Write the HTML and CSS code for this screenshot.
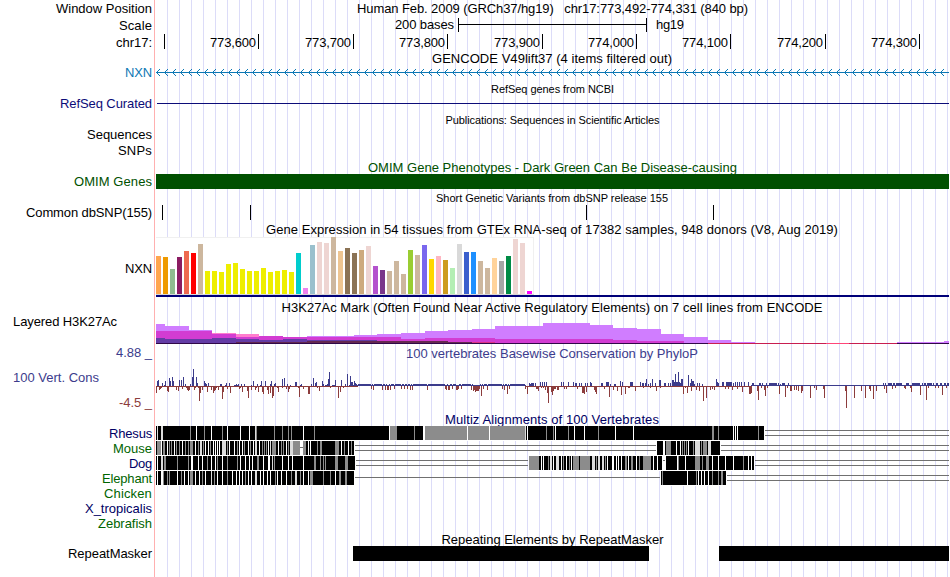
FILE: index.html
```html
<!DOCTYPE html>
<html lang="en">
<head>
<meta charset="utf-8">
<title>Human chr17:773,492-774,331</title>
<link rel="stylesheet" href="styles.css">
</head>
<body>
<main class="browser">
  <div class="row h17"><div class="label"><span data-w="96">Window Position</span></div><div class="title even"><span data-w="391">Human Feb. 2009 (GRCh37/hg19)   chr17:773,492-774,331 (840 bp)</span></div></div>
  <div class="row h17"><div class="label"><span data-w="33">Scale</span></div><svg id="scale"></svg></div>
  <div class="row h17"><div class="label"><span data-w="36">chr17:</span></div><svg id="ruler"></svg></div>
  <div class="row h15"><div class="label"></div><div class="title"><span data-w="240">GENCODE V49lift37 (4 items filtered out)</span></div></div>
  <div class="row h15 blue"><div class="label up"><span data-w="27">NXN</span></div><svg id="gencode"></svg></div>
  <div class="row h16"><div class="label"></div><div class="title small even"><span data-w="123">RefSeq genes from NCBI</span></div></div>
  <div class="row h15 navy"><div class="label up"><span data-w="92">RefSeq Curated</span></div><svg id="refseq"></svg></div>
  <div class="row h15"><div class="label"></div><div class="title small low even"><span data-w="214">Publications: Sequences in Scientific Articles</span></div></div>
  <div class="row h16"><div class="label top"><span data-w="65">Sequences</span></div></div>
  <div class="row h16"><div class="label top"><span data-w="34">SNPs</span></div></div>
  <div class="row h15 green"><div class="label"></div><div class="title low even"><span data-w="369">OMIM Gene Phenotypes - Dark Green Can Be Disease-causing</span></div></div>
  <div class="row h15 green"><div class="label"><span data-w="78">OMIM Genes</span></div><svg id="omim"></svg></div>
  <div class="row h16"><div class="label"></div><div class="title small lower"><span data-w="232">Short Genetic Variants from dbSNP release 155</span></div></div>
  <div class="row h16"><div class="label top"><span data-w="126">Common dbSNP(155)</span></div><svg id="dbsnp"></svg></div>
  <div class="row h16"><div class="label"></div><div class="title"><span data-w="572">Gene Expression in 54 tissues from GTEx RNA-seq of 17382 samples, 948 donors (V8, Aug 2019)</span></div></div>
  <div class="row h63"><div class="label"><span data-w="27">NXN</span></div><svg id="gtex"></svg></div>
  <div class="row h15"><div class="label"></div><div class="title"><span data-w="541">H3K27Ac Mark (Often Found Near Active Regulatory Elements) on 7 cell lines from ENCODE</span></div></div>
  <div class="row h30"><div class="label start up"><span data-w="104">Layered H3K27Ac</span></div><svg id="h3k"></svg></div>
  <div class="row h16 slate"><div class="label top"><span data-w="36">4.88 _</span></div><div class="title"><span data-w="292">100 vertebrates Basewise Conservation by PhyloP</span></div></div>
  <div class="row h51 slate">
    <div class="label stack"><span class="name" data-w="86">100 Vert. Cons</span><span class="brown" data-w="33">-4.5 _</span></div>
    <svg id="phylop"></svg>
  </div>
  <div class="row h14 deep"><div class="label"></div><div class="title"><span data-w="214">Multiz Alignments of 100 Vertebrates</span></div></div>
  <div class="multi">
    <div class="species">
      <span class="deep" data-w="43">Rhesus</span><span class="leaf" data-w="39">Mouse</span><span class="deep" data-w="23">Dog</span><span class="leaf" data-w="50">Elephant</span><span class="leaf" data-w="48">Chicken</span><span class="deep" data-w="67">X_tropicalis</span><span class="leaf" data-w="54">Zebrafish</span>
    </div>
    <svg id="multiz"></svg>
  </div>
  <div class="row h15"><div class="label"></div><div class="title low even"><span data-w="222">Repeating Elements by RepeatMasker</span></div></div>
  <div class="row h15"><div class="label"><span data-w="84">RepeatMasker</span></div><svg id="repeats"></svg></div>
</main>
<script src="tracks.js"></script>
</body>
</html>
```
FILE: styles.css
```css
* { box-sizing: border-box; }
body { margin: 0; background: #fff; font: 13px/15px "Liberation Sans", Arial, sans-serif; color: #000; overflow: hidden; }
.browser {
  width: 949px; height: 577px;
  background:
    linear-gradient(#ffb0b0, #ffb0b0) 154px 0 / 1px 100% no-repeat,
    repeating-linear-gradient(90deg, #dcdcf8 0 1px, transparent 1px 12px) 167px 0 / 782px 100% no-repeat;
}
.row, .multi { display: grid; grid-template-columns: 156px 793px; }
.label { display: flex; align-items: center; justify-content: flex-end; padding-right: 4px; white-space: pre; }
.label.start { justify-content: flex-start; padding-left: 13px; }
.label.top { align-items: flex-start; }
.label.up { align-items: flex-start; margin-top: -1px; }
.label.stack { flex-direction: column; justify-content: space-between; align-items: flex-end; padding-top: 9px; padding-bottom: 2px; }
.name { align-self: flex-start; margin-left: 13px; }
.title { display: flex; align-items: center; justify-content: center; padding-right: 1px; white-space: pre; }
.title.even { padding-right: 0; }
.small { font-size: 11px; }
.low { padding-top: 1px; }
.lower { padding-top: 2px; }
.species { display: grid; grid-template-rows: repeat(7, 15px); justify-items: end; padding-right: 4px; }
svg { display: block; width: 793px; height: 100%; shape-rendering: crispEdges; }
.h14 { height: 14px; }
.h15 { height: 15px; }
.h16 { height: 16px; }
.h17 { height: 17px; }
.h30 { height: 30px; }
.h51 { height: 51px; }
.h63 { height: 63px; }
.multi { height: 105px; }
.blue { color: #0c78b4; }
.navy { color: #0c0c78; }
.green { color: #005000; }
.slate { color: #3c3c8c; }
.brown { color: #8c3c3c; }
.deep { color: #000064; }
.leaf { color: #006400; }
```
FILE: tracks.js
```js
// Horizontal coordinates are image pixels; each track's view starts at x = 156.
const LEFT = 156, WIDTH = 793;
const rect = (x, y, w, h, c) => `<rect x="${x}" y="${y}" width="${w}" height="${h}" fill="${c}"/>`;
const text = (x, y, s, w, a = 'start') => `<text x="${x}" y="${y}" text-anchor="${a}" font-size="13" textLength="${w}">${s}</text>`;
function draw(id, height, body) {
  const el = document.getElementById(id);
  el.setAttribute('viewBox', `${LEFT} 0 ${WIDTH} ${height}`);
  el.innerHTML = body;
}

// Spread each caption over its nominal width.
document.querySelectorAll('[data-w]').forEach(el => {
  const w = el.getBoundingClientRect().width;
  el.style.letterSpacing = (el.dataset.w - w) / el.textContent.length + 'px';
});

draw('scale', 17, rect(458, 7, 189, 1, '#000') + rect(458, 1, 1, 14, '#000') + rect(646, 1, 1, 14, '#000') +
  text(395, 12, '200 bases', 59) + text(656, 12, 'hg19', 28));

draw('ruler', 17, [164, 258, 353, 447, 542, 636, 730, 825, 919].map((x, i) =>
  rect(x, 0, 1, 15, '#000') + (i ? text(x - 48, 13, (773500 + i * 100).toLocaleString('en-US'), 46) : '')).join(''));

let arrows = rect(156, 6, 793, 1, '#0c78b4');
for (let x = 156; x < 944; x += 8)
  for (let d = 1; d < 4; d++) arrows += rect(x + d, 6 - d, 1, 1, '#0c78b4') + rect(x + d, 6 + d, 1, 1, '#0c78b4');
draw('gencode', 15, arrows);
draw('refseq', 15, rect(157, 6, 792, 1, '#0c0c78'));
draw('omim', 15, rect(156, 0, 793, 15, '#005000'));
draw('dbsnp', 16, [162, 250, 586, 713].map(x => rect(x, 0, 1, 15, '#000')).join(''));

// Tissue bars: height in thirds of a pixel, colour.
const tissues = `114 FFA54F,111 EE9A00,75 8FBC8F,111 8B1C62,129 EE6A50,123 FF0000,150 CDB79E,
69 EEEE00,69 EEEE00,66 EEEE00,90 EEEE00,93 EEEE00,75 EEEE00,69 EEEE00,69 EEEE00,78 EEEE00,66 EEEE00,69 EEEE00,72 EEEE00,66 EEEE00,
123 00CDCD,18 EE82EE,147 9AC0CD,156 EED5D2,153 EED5D2,171 CDB79E,129 EEC591,138 8B7355,123 8B7355,132 CDAA7D,144 EED5D2,
84 B452CD,72 7A378B,69 CDB79E,99 CDB79E,60 CDB79E,132 9ACD32,117 CDB79E,147 7A67EE,105 FFD700,114 FFB6C1,102 CD9B1D,78 B4EEB4,
150 D9D9D9,126 3A5FCD,126 1E90FF,99 CDB79E,78 CDB79E,108 FFD39B,99 A6A6A6,114 008B45,165 EED5D2,153 EED5D2,9 FF00FF`.split(',');
draw('gtex', 63, rect(156, 0, 378, 58, '#f0f0f0') + rect(156, 1, 377, 56, '#fff') + rect(156, 57, 378, 1, '#d8d8d8') +
  tissues.map((t, i) => {
    const [h, c] = t.trim().split(' ');
    return rect(156 + i * 7, 57 - h / 3, 5, h / 3, '#' + c);
  }).join('') + rect(156, 58, 793, 2, '#000078'));

// Each layer: colour, then x:top steps; a top of 29 closes the step.
const layers = [
  ['#d07dff', '156:9 165:11 189:15 212:19 236:29 307:21 354:20 377:19 401:18 425:16 448:15 472:14 495:11 543:8 590:10 613:13 637:14 661:19 684:22 708:25 731:27 755:29 897:27 944:26 949:29'],
  ['#ff7dcd', '212:18 236:19 259:29'],
  ['#d23cd2', '156:16 212:19 236:22 259:21 283:22 401:24 425:23 495:24 613:25 637:26 684:29'],
  ['#643ca5', '156:23 165:24 212:23 236:24 259:25 283:24 307:25 377:26 401:29'],
  ['#642850', '236:27 307:26 401:26 448:27 472:29'],
  ['#dc3282', '472:27 495:29'],
  ['#300848', '156:28 708:29 897:28 949:29'],
  ['#c81e50', '708:28 826:29 849:28 897:29'],
  ['#ff4678', '826:28 849:29']
];
draw('h3k', 30, layers.map(([c, s]) => {
  const p = s.split(' ').map(q => q.split(':').map(Number));
  return p.slice(0, -1).map(([x, y], i) => y < 29 ? rect(x, y, p[i + 1][0] - x, 29 - y, c) : '').join('');
}).join(''));

// Conservation scores, x:value; values are bar heights in pixels.
const up = `157:5 158:6 162:3 164:1 165:5 169:8 170:5 172:9 173:5 179:6 181:6 183:9 185:2 190:2 192:9 193:17 196:9 197:3 204:5 205:3 206:2 208:3 220:2 221:2 225:1 226:3 229:3 234:1 235:1 236:2 237:1 238:2 241:2 244:2 251:1 253:5 257:2 260:1 261:5 265:5 270:2 271:5 274:2 275:3 282:7 284:8 287:2 290:1 295:4 296:4 300:1 301:2 311:2 313:8 315:3 316:4 322:5 323:2 325:1 326:1 327:2 328:7 329:14 332:1 333:1 334:1 335:6 341:6 345:2 347:12 349:1 350:10 351:4 352:4 353:1 354:5 355:3 356:2 357:1 529:3 530:2 531:3 532:3 533:3 535:3 540:4 542:4 544:4 546:4 561:4 563:4 568:4 573:4 575:3 576:3 579:3 581:3 585:3 587:3 590:4 591:3 601:3 602:3 606:4 607:4 608:4 610:2 614:2 615:2 620:5 622:4 630:4 631:4 632:4 640:4 642:3 643:3 645:3 646:7 648:2 650:3 652:7 655:3 659:6 660:6 664:3 665:3 668:3 670:3 672:6 673:6 674:4 675:12 676:4 677:4 678:14 679:4 680:3 681:7 682:7 688:11 690:3 691:7 692:5 693:5 694:2 697:3 699:3 702:2 716:7 717:4 718:3 722:4 723:4 726:4 727:4 728:4 729:4 730:4 731:4 733:3 735:4 737:4 739:4 741:4 744:4 748:4 752:3 753:3 759:3 760:3 762:3 766:3 769:3 770:3 771:3 772:3 773:3 774:3 775:3 776:3 778:3 780:2 782:3 783:3 784:3 788:3 883:3 885:3 888:3 889:3 890:3 891:3 893:3 894:3 896:3 897:3 898:3 899:3 900:3 901:3 906:3 907:3 908:3 912:3 913:3 914:3 915:3 916:3 917:3 918:3 919:3 922:3 924:3 925:3 927:3 928:3 929:3 930:3 931:3 933:3 936:3 937:3 940:3 941:3 944:3 945:3 947:3 948:3`;
const down = `156:7 159:4 160:3 161:2 163:1 167:5 168:6 176:4 178:5 182:3 186:2 187:4 188:5 189:4 194:4 195:2 198:2 199:15 200:7 202:4 207:6 211:4 213:7 214:5 215:4 216:2 218:4 222:13 223:6 227:3 230:7 239:3 240:2 242:6 247:5 248:12 251:4 255:4 256:2 258:6 262:6 263:8 267:4 268:8 270:7 272:12 273:10 277:2 278:6 282:2 286:3 288:6 289:3 298:2 299:11 303:3 308:8 309:8 317:2 319:5 330:2 338:12 340:6 343:2 371:3 373:4 382:4 385:4 387:4 388:4 390:4 394:3 401:3 404:3 407:3 410:4 412:4 427:4 445:3 446:4 448:4 449:4 452:3 456:4 457:4 458:3 461:3 471:4 473:5 474:4 475:6 476:5 477:5 478:5 479:3 481:10 483:3 487:4 502:3 504:4 507:8 509:3 525:3 527:8 536:3 537:3 538:5 541:2 543:2 545:4 547:7 548:17 551:6 552:9 553:5 554:3 555:3 557:4 558:4 564:3 566:3 577:3 582:7 583:7 584:8 586:6 594:4 595:6 596:8 604:3 609:11 613:4 617:5 621:9 625:8 628:2 629:2 635:5 643:2 650:2 656:5 660:2 683:8 685:2 687:7 691:5 696:4 699:5 703:15 706:12 710:4 712:3 714:4 725:3 728:3 732:4 737:3 742:6 749:8 750:8 751:7 757:5 758:14 761:2 764:4 765:10 767:2 779:8 785:11 787:2 790:5 791:5 794:4 796:4 798:5 801:7 802:5 810:12 814:2 816:4 823:3 824:12 845:5 846:22 854:12 861:5 865:12 869:3 870:5 873:13 876:5 884:3 886:7 892:3 895:2 904:2 905:3 910:2 911:6 920:9 926:14 928:2 935:2 938:2 942:9 946:2`;
const parse = s => new Map(s.split(' ').map(q => q.split(':').map(Number)));
const ups = parse(up), downs = parse(down);
let wiggle = '';
for (let x = 156; x < 949; x++) {
  const u = ups.get(x), d = downs.get(x);
  if (d) wiggle += rect(x, 25, 1, d, '#8c3c3c');
  if (u) wiggle += rect(x, 25 - u, 1, u, '#3c3c8c');
  if (x > 357 && x < 526 && !d) wiggle += rect(x, 23, 1, 2, '#3c3c8c');
  if (x > 750) wiggle += rect(x, 24, 1, 1, '#3c3c8c');
  else if (x > 357 && x < 526) wiggle += rect(x, 24, 1, 1, '#3c3c8c');
  else if (!d) wiggle += rect(x, 25, 1, 1, '#8c3c3c');
}
draw('phylop', 51, wiggle);

// Alignment blocks [from, to] and slits "x+colour+width": w white, l light, g grey.
const tone = { w: '#fff', l: '#dcdcdc', g: '#8c8c8c', k: '#000' };
const species = [
  { blocks: [[156, 764]], gaps: [[765, 949, 4], [765, 949, 9]],
    slits: '157l1 161l2 190g1 196w1 204g1 211w1 222g1 227w1 240w1 249w1 255l1 256g1 274g1 282g1 288g1 291g1 303w1 314g1 389w1 390g7 414g1 423w2 425g100 467w1 489w1 525l1 527w1 546g1 553g1 555w1 568g1 574w1 584w1 598g1 615w1 633w1 712g2 718g1 733w1 735w1 737w1 758g1' },
  { blocks: [[156, 354], [657, 720]], gaps: [[355, 657, 4], [355, 657, 9], [721, 949, 4], [721, 949, 9]],
    slits: '157g4 161w1 163g2 167w1 169g1 171g1 174w1 176g1 179g1 182w1 185g1 188g1 190g3 195w1 198g1 200l2 203g1 205w1 208w1 210g1 213w1 215w1 217w1 219w1 222l4 227g1 229w1 234w1 237g1 239w1 242w1 244g1 248w1 250g1 253w1 255l2 259w1 262g1 264g1 266g1 268w1 270l1 272g4 278w1 281g1 283g1 286w1 288g1 290l3 293g7 300w3 303g3 308w1 310w1 317g1 320g2 335g4 341w1 344g1 348w1 351g1 663w2 666g5 676w1 680w1 682g1 684g1 686g1 688w1 693g1 695l5 701g1 703g4 708l3' },
  { blocks: [[156, 355], [529, 662], [666, 754]], gaps: [[356, 529, 4], [356, 529, 9], [662, 666, 4], [755, 949, 4], [755, 949, 9]],
    slits: '157w1 161l2 164g2 177g1 188g1 191w2 198w1 202w1 207g1 211w1 215w1 217g1 222w1 227g1 237g1 240w1 245w1 249w1 252w1 257g2 263w1 268w2 272l1 274g1 282w1 288w1 292w1 303w1 314g2 320g1 323g1 325g1 335g3 345g3 529g10 541w1 543w1 548g1 550l2 553w1 556l3 561w1 563g1 566w1 569g1 571w1 573g6 580g10 592l3 596g1 598l2 602l2 605g1 607w1 612w2 616w1 618w1 621w1 625g2 628w1 631g2 636w1 639g1 643g8 653w1 657w1 677w1 678g1 685w1 695g5 702g1 706g3 712w1 718w1 725w1 733w1 743g1 748w1 751w1' },
  { blocks: [[156, 354], [661, 726]], gaps: [[355, 661, 6], [727, 949, 4], [727, 949, 9]],
    slits: '157w1 161w2 163g1 167g1 169g1 177w1 181g1 184w1 188w1 190g3 195w1 199w1 202g1 205w1 211l1 214g1 217w1 222w1 227g1 232w1 236w1 239w1 242w1 245g1 248w1 251w1 255l2 260w1 263w1 267w1 270w1 275g1 277w1 281w1 286w1 291g1 295l2 300g1 303w1 308w1 310g3 323g1 330g1 335w1 339g2 345g2 662g1 687w1 696g1 698w1 701w1 704w1 708w1 712g1 718g1 721g2' }
];
draw('multiz', 105, species.map(({ blocks, gaps, slits }, i) => {
  const y = i * 15;
  return gaps.map(([a, b, dy]) => rect(a, y + dy, b - a, 1, '#707070')).join('') +
    blocks.map(([a, b]) => rect(a - 1, y - 1, b - a + 2, 16, '#fff') + rect(a, y, b - a, 14, '#000')).join('') +
    slits.split(' ').map(s => {
      const m = s.match(/^(\d+)([wlgk])(\d+)$/);
      return rect(m[1], y, m[3], 14, tone[m[2]]);
    }).join('') + (i === 1 ? rect(300, y + 6, 3, 1, '#707070') : '');
}).join(''));

draw('repeats', 15, rect(353, 0, 296, 15, '#000') + rect(719, 0, 230, 15, '#000'));
```
